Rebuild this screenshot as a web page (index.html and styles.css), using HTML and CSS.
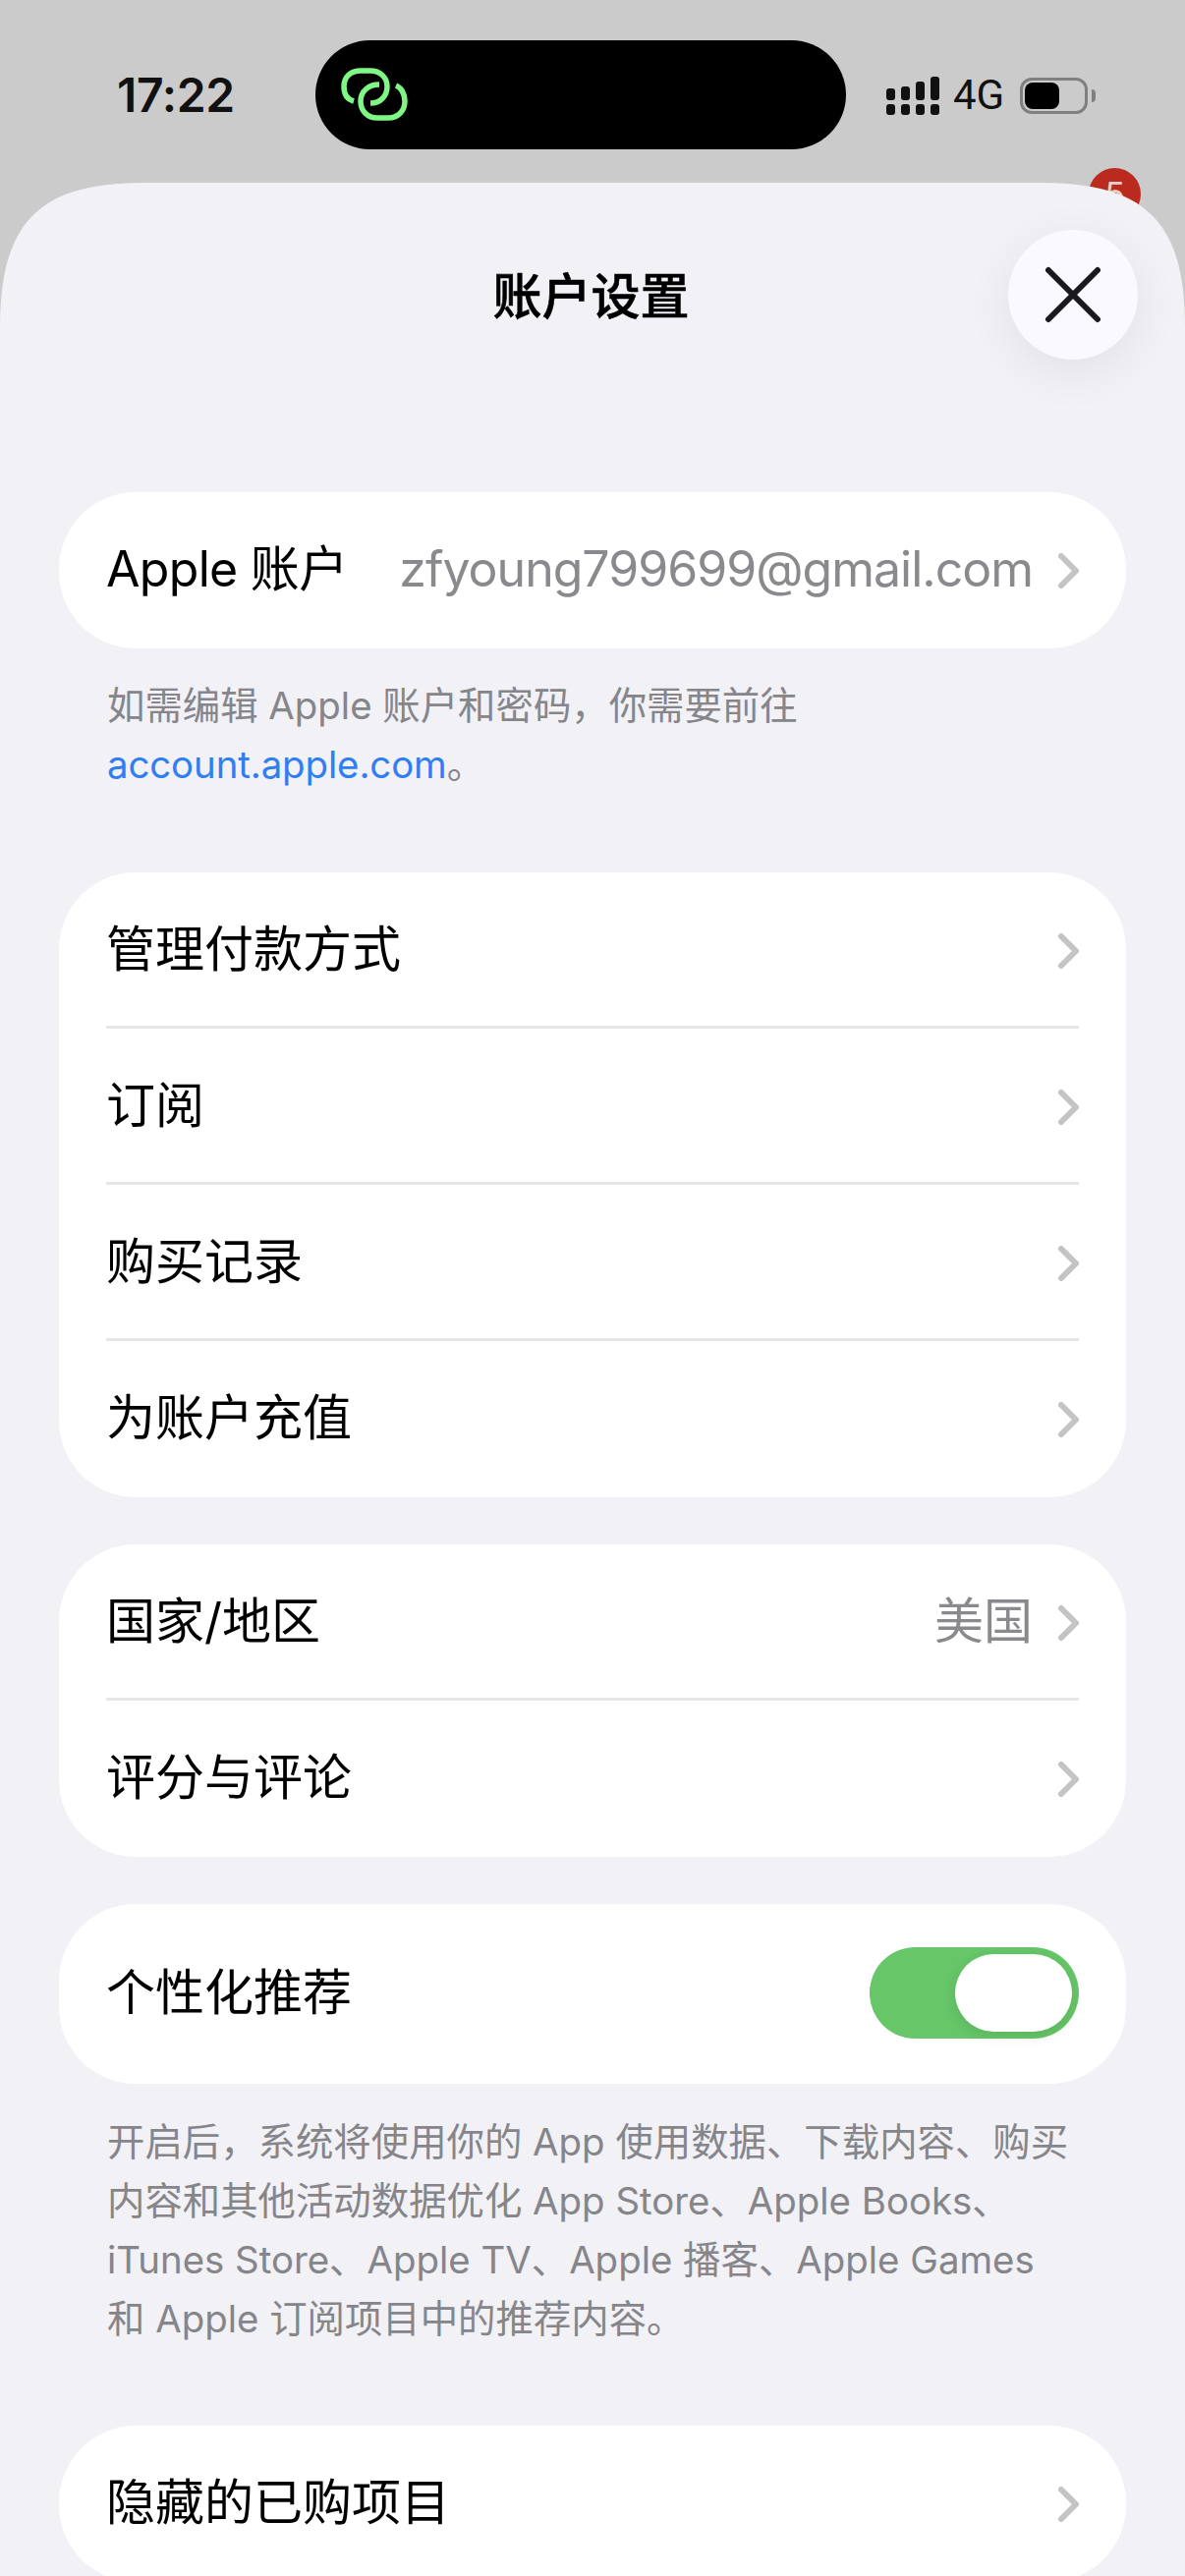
FILE: index.html
```html
<!DOCTYPE html>
<html lang="zh-CN">
<head>
<meta charset="utf-8">
<title>账户设置</title>
<link rel="stylesheet" href="styles.css">
</head>
<body>
<div class="screen">
  <header class="status">
    <div class="time">17:22</div>
    <div class="island">
      <svg class="link-icon" width="70" height="54" viewBox="0 0 70 54" fill="none">
        <path d="M14 34C7 32 4 26 4 19C4 9 11 3 21 3H31C41 3 48 10 48 19C48 29 41 36 31 36"/>
        <path d="M40 17C29 17 21 24 21 34C21 44 28 51 38 51H49C59 51 66 44 66 34C66 26 62 20 57 18"/>
      </svg>
    </div>
    <div class="signal">
      <span class="bar b1"></span><span class="bar b2"></span><span class="bar b3"></span><span class="bar b4"></span>
    </div>
    <div class="net">4G</div>
    <div class="battery"><span class="level"></span></div>
    <span class="cap"></span>
    <span class="badge">5</span>
  </header>
  <main class="sheet">
    <button class="close" type="button" aria-label="关闭">
      <svg width="58" height="58" viewBox="0 0 58 58" fill="none"><path d="M4 4L54 54M54 4L4 54"/></svg>
    </button>
    <h1 class="title">账户设置</h1>

    <section class="card">
      <div class="row"><span class="label label-latin">Apple 账户</span><span class="value email">zfyoung799699@gmail.com</span>
        <svg class="chev" width="21" height="36" viewBox="0 0 21 36" fill="none"><path d="M3 3L18 18L3 33"/></svg></div>
    </section>
    <p class="note note-a">如需编辑 Apple 账户和密码，你需要前往<br><a class="link">account.apple.com</a>。</p>

    <section class="card">
      <div class="row"><span class="label">管理付款方式</span><svg class="chev" width="21" height="36" viewBox="0 0 21 36" fill="none"><path d="M3 3L18 18L3 33"/></svg></div>
      <div class="row"><span class="label">订阅</span><svg class="chev" width="21" height="36" viewBox="0 0 21 36" fill="none"><path d="M3 3L18 18L3 33"/></svg></div>
      <div class="row"><span class="label">购买记录</span><svg class="chev" width="21" height="36" viewBox="0 0 21 36" fill="none"><path d="M3 3L18 18L3 33"/></svg></div>
      <div class="row"><span class="label">为账户充值</span><svg class="chev" width="21" height="36" viewBox="0 0 21 36" fill="none"><path d="M3 3L18 18L3 33"/></svg></div>
    </section>

    <section class="card gap">
      <div class="row"><span class="label">国家/地区</span><span class="value">美国</span><svg class="chev" width="21" height="36" viewBox="0 0 21 36" fill="none"><path d="M3 3L18 18L3 33"/></svg></div>
      <div class="row"><span class="label">评分与评论</span><svg class="chev" width="21" height="36" viewBox="0 0 21 36" fill="none"><path d="M3 3L18 18L3 33"/></svg></div>
    </section>

    <section class="card gap">
      <div class="row row-switch"><span class="label">个性化推荐</span><span class="switch"><span class="thumb"></span></span></div>
    </section>
    <p class="note note-b">开启后，系统将使用你的 App 使用数据、下载内容、购买<br>内容和其他活动数据优化 App Store、Apple Books、<br>iTunes Store、Apple TV、Apple 播客、Apple Games<br>和 Apple 订阅项目中的推荐内容。</p>

    <section class="card">
      <div class="row"><span class="label">隐藏的已购项目</span><svg class="chev" width="21" height="36" viewBox="0 0 21 36" fill="none"><path d="M3 3L18 18L3 33"/></svg></div>
    </section>
  </main>
</div>
</body>
</html>
```
FILE: styles.css
```css
* { box-sizing: border-box; }
html, body { margin: 0; padding: 0; }
body {
  background: #cbcbcb;
  font-family: "Inter", "Noto Sans CJK SC", "Liberation Sans", sans-serif;
  color: #000;
}
.screen { width: 1206px; height: 2622px; overflow: hidden; }

.status {
  position: relative;
  height: 186px;
  padding: 41px 0 34px 119px;
  display: flex;
  align-items: center;
}
.time {
  width: 202px;
  font-size: 48px;
  font-weight: 600;
  line-height: 56px;
  letter-spacing: -0.3px;
  color: #111;
}
.island {
  width: 540px;
  height: 111px;
  border-radius: 56px;
  background: #000;
  padding-left: 25px;
  display: flex;
  align-items: center;
  flex: none;
}
.link-icon { margin-top: -1px; }
.link-icon path { stroke: #7ff784; stroke-width: 5.5; }

.signal {
  margin-left: 41px;
  width: 54px;
  display: flex;
  gap: 6px;
  align-items: flex-end;
  height: 39px;
  margin-top: 1px;
}
.bar { position: relative; width: 9px; border-radius: 3px; background: #111; flex: none; }
.bar::after {
  content: "";
  position: absolute;
  left: 0;
  bottom: -15px;
  width: 9px;
  height: 11px;
  border-radius: 3px;
  background: #111;
}
.b1 { height: 12px; margin-bottom: 15px; }
.b2 { height: 14px; margin-bottom: 15px; }
.b3 { height: 19px; margin-bottom: 15px; }
.b4 { height: 24px; margin-bottom: 15px; }

.net {
  margin-left: 14px;
  width: 54px;
  font-family: "Roboto", "Inter", sans-serif;
  font-size: 42px;
  line-height: 40px;
  color: #111;
  flex: none;
}
.battery {
  width: 69px;
  height: 37px;
  margin-left: 14px;
  margin-top: 1px;
  border: 3px solid #808080;
  border-radius: 12px;
  padding: 2px;
  flex: none;
}
.level { display: block; width: 35px; height: 100%; background: #000; border-radius: 8px; }
.cap {
  width: 4px;
  height: 13px;
  margin-left: 4px;
  margin-top: 1px;
  background: #808080;
  border-radius: 0 6px 6px 0;
  flex: none;
}
.badge {
  position: absolute;
  left: 1108px;
  top: 171px;
  width: 53px;
  height: 53px;
  border-radius: 50%;
  background: #bb2a1e;
  color: #e8d0cc;
  font-size: 34px;
  line-height: 53px;
  text-align: center;
}

.sheet {
  position: relative;
  height: 2436px;
  padding: 85px 60px 0;
  background: #f1f1f6;
  clip-path: path("M0 147C0 40 40 0 146 0H1060C1166 0 1206 40 1206 147V2436H0Z");
}
.close {
  position: absolute;
  left: 1026px;
  top: 48px;
  width: 132px;
  height: 132px;
  padding: 0;
  border: 0;
  border-radius: 50%;
  background: #fafafe;
  box-shadow: 0 12px 50px rgba(0, 0, 0, .07);
  display: flex;
  align-items: center;
  justify-content: center;
}
.close path { stroke: #1a1a1e; stroke-width: 6; stroke-linecap: round; }

.title {
  margin: 0 0 170px;
  padding: 1px 3px 0 0;
  height: 60px;
  font-size: 50px;
  font-weight: 500;
  -webkit-text-stroke: 0.6px #000;
  line-height: 60px;
  text-align: center;
}

.card { background: #fff; border-radius: 78px; }
.gap { margin-top: 48px; }
.row {
  height: 159px;
  margin: 0 48px;
  display: flex;
  align-items: center;
  border-bottom: 3px solid #e6e6e8;
}
.row:last-child { border-bottom-color: transparent; }
.row-switch { height: 183px; }
.label { font-size: 50px; line-height: 60px; white-space: nowrap; }
.label-latin { letter-spacing: -0.7px; }
.value { margin-left: auto; font-size: 50px; line-height: 60px; color: #8a8a8e; white-space: nowrap; }
.email { letter-spacing: -1px; }
.chev { margin-left: 26px; margin-top: 3px; flex: none; }
.label + .chev { margin-left: auto; }
.chev path { stroke: #c4c4c6; stroke-width: 6; stroke-linecap: round; stroke-linejoin: round; }

.switch {
  position: relative;
  margin-left: auto;
  width: 213px;
  height: 93px;
  border-radius: 47px;
  background: #66c668;
}
.thumb {
  position: absolute;
  left: 87px;
  top: 7px;
  width: 119px;
  height: 79px;
  border-radius: 40px;
  background: #fff;
  box-shadow: 0 4px 14px rgba(0, 0, 0, .1);
}

.note {
  margin: 0;
  padding-left: 49px;
  font-size: 38.4px;
  line-height: 60px;
  color: #85858a;
  white-space: nowrap;
}
.note-a { padding-top: 28px; margin-bottom: 80px; }
.note-b { padding-top: 29px; margin-bottom: 79px; }
.link { color: #2f7ff2; letter-spacing: -0.1px; }
```
